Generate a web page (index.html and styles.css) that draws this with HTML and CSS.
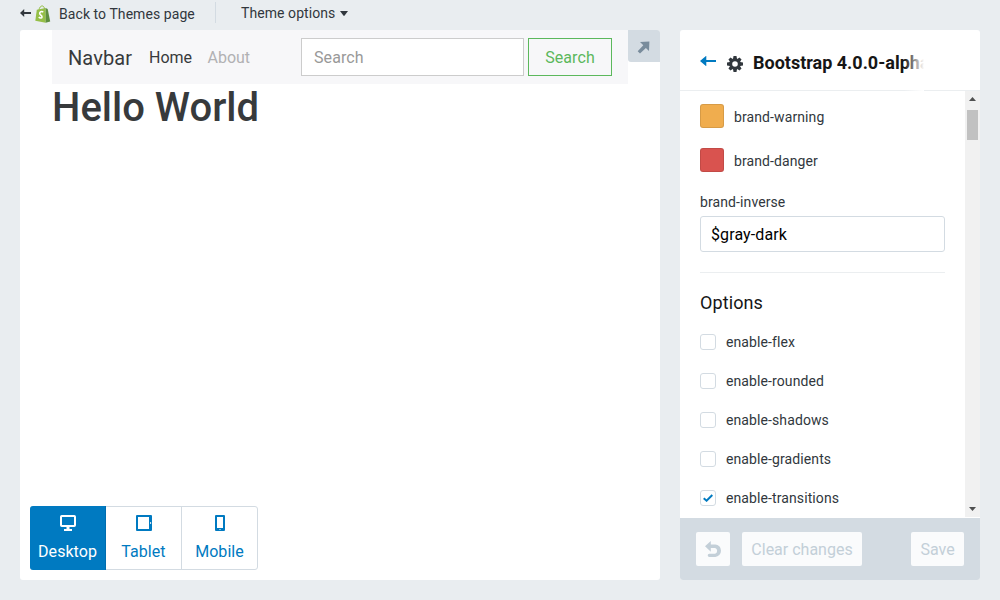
FILE: index.html
```html
<!DOCTYPE html>
<html lang="en">
<head>
<meta charset="utf-8">
<title>Theme editor</title>
<link rel="stylesheet" href="styles.css">
</head>
<body>
<header class="topbar">
  <a class="back">
    <svg class="back-arrow" width="11" height="8" viewBox="0 0 11 8"><path d="M0 4 4.200 0v3H11v2H4.200v3z" fill="#31373d"/></svg>
    <svg class="bag" width="16" height="18" viewBox="0 0 16 18"><path d="M1.800 4.700 10.600 3v14.800L.3 15.800z" fill="#95bf47"/><path d="M10.600 3l2.100 1.100 2.500 12.300-4.600 1.400z" fill="#5e8e3e"/><path d="M4 5C4.300 2.500 5.800.9 7.100.9S9.400 2.200 9.500 4" fill="none" stroke="#95bf47" stroke-width="1"/><path d="M8.300 6.900C6.500 6.100 4.600 6.800 4.700 8.500 4.800 10.200 7.300 10.100 7 12.100 6.800 13.500 5 13.200 3.700 12.100" fill="none" stroke="#fff" stroke-width="1.600"/></svg>
    <span>Back to Themes page</span>
  </a>
  <a class="theme-options">Theme options <svg width="8" height="5" viewBox="0 0 8 5"><path d="M0 0h8L4.600 4.600q-.6.6-1.200 0z" fill="#31373d"/></svg></a>
</header>
<main class="workspace">
  <section class="preview">
    <div class="site">
      <nav class="navbar">
        <span class="brand">Navbar</span><span class="home">Home</span><span class="about">About</span>
        <div class="search-input">Search</div>
        <div class="search-button">Search</div>
      </nav>
      <h1 class="headline">Hello World</h1>
    </div>
    <div class="expand"><svg width="13" height="13" viewBox="0 0 13 13"><path d="M3 1 12.400.4 12 10 8.900 7 3 12.500.7 10.200 6.300 4.300z" fill="#798c9c"/></svg></div>
    <div class="devices">
      <div class="device active"><svg width="16" height="16" viewBox="0 0 16 16"><rect x="1" y="1" width="14" height="10" rx=".8" fill="none" stroke="currentColor" stroke-width="2"/><path d="M6.500 11h3v3H12v2H4v-2h2.500z" fill="currentColor"/></svg><span>Desktop</span></div>
      <div class="device"><svg width="16" height="16" viewBox="0 0 16 16"><path fill="currentColor" fill-rule="evenodd" d="M1 0h14q1 0 1 1v14q0 1-1 1H1q-1 0-1-1V1q0-1 1-1zm1 2v12h11V2zm12.200 5v2h.9V7z"/></svg><span>Tablet</span></div>
      <div class="device"><svg width="16" height="16" viewBox="0 0 16 16"><path fill="currentColor" fill-rule="evenodd" d="M4 0h8q1 0 1 1v14q0 1-1 1H4q-1 0-1-1V1q0-1 1-1zm1 2v11h6V2zm2.500 12v1h1v-1z"/></svg><span>Mobile</span></div>
    </div>
  </section>
  <aside class="panel">
    <div class="panel-head">
      <svg class="panel-back" width="16" height="10" viewBox="0 0 16 10"><path d="M0 5 6.300-.3V3.900H16v2.200H6.300v4.200z" fill="#007ac1"/></svg>
      <svg class="gear" width="16" height="16" viewBox="-8 -8 16 16"><g fill="#31373d"><path d="M-1.500-8h3l.5 3h-4zM-1.500 8h3l.5-3h-4zM-8-1.500v3l3 .5v-4zM8-1.500v3l-3 .5v-4z"/><path transform="rotate(45)" d="M-1.500-7.800h3l.5 3h-4zM-1.500 7.800h3l.5-3h-4zM-7.800-1.500v3l3 .5v-4zM7.800-1.500v3l-3 .5v-4z"/></g><circle r="4.300" fill="none" stroke="#31373d" stroke-width="3"/></svg>
      <h2 class="panel-title">Bootstrap 4.0.0-alpha</h2>
    </div>
    <div class="panel-scroll">
      <div class="settings">
        <div class="swatch-row"><span class="swatch warning"></span>brand-warning</div>
        <div class="swatch-row"><span class="swatch danger"></span>brand-danger</div>
        <div class="field-label">brand-inverse</div>
        <div class="field">$gray-dark</div>
        <h3 class="group-title">Options</h3>
        <div class="check-row"><span class="box"></span>enable-flex</div>
        <div class="check-row"><span class="box"></span>enable-rounded</div>
        <div class="check-row"><span class="box"></span>enable-shadows</div>
        <div class="check-row"><span class="box"></span>enable-gradients</div>
        <div class="check-row"><span class="box"><svg width="10" height="8" viewBox="0 0 10 8"><path d="M.7 4.200 3.600 6.700 9.300 1" fill="none" stroke="#007ac1" stroke-width="2"/></svg></span>enable-transitions</div>
      </div>
      <div class="scrollbar">
        <svg width="7" height="4" viewBox="0 0 7 4"><path d="M0 4 3.500 0 7 4z" fill="#505050"/></svg>
        <span class="thumb"></span>
        <svg class="down" width="7" height="4" viewBox="0 0 7 4"><path d="M0 0h7L3.500 4z" fill="#505050"/></svg>
      </div>
    </div>
    <footer class="panel-foot">
      <div class="btn undo"><svg width="16" height="16" viewBox="0 0 16 16"><path d="M0 5.200 5.800 0v3.500h4.500a5.700 6.200 0 0 1 0 12.400H4.300q-1.600 0-1.600-1.600t1.600-1.600h5.800a2.500 2.900 0 0 0 0-5.700H5.800v3.700z" fill="#c3cfd8"/></svg></div>
      <div class="btn clear">Clear changes</div>
      <div class="btn save">Save</div>
    </footer>
  </aside>
</main>
</body>
</html>
```
FILE: styles.css
```css
* { box-sizing: border-box; }
body { margin: 0; width: 1000px; height: 600px; overflow: hidden; background: #e9edf0; color: #31373d; font: 14px/20px Roboto, sans-serif; white-space: nowrap; }
svg { display: block; flex: none; }
h1, h2, h3 { margin: 0; }

.topbar { display: flex; height: 30px; padding-left: 20px; letter-spacing: .07px; }
.back { display: flex; width: 196px; height: 21px; margin-top: 2px; border-right: 1px solid #d3dbe2; }
.back-arrow { margin-top: 7px; }
.bag { margin: 3px 8px 0 4px; }
.back span { margin-top: 2px; }
.theme-options { display: flex; margin: 3px 0 0 25px; gap: 5px; }
.theme-options svg { margin-top: 8px; }

.workspace { display: flex; gap: 20px; padding: 0 20px; height: 550px; }
.preview { position: relative; width: 640px; background: #fff; border-radius: 3px; }
.site { margin: 0 32px; color: #373a3c; }
.navbar { display: flex; height: 54px; padding: 8px 16px; background: #f7f7f9; font-size: 16px; line-height: 40px; }
.brand { width: 81px; font-size: 20px; letter-spacing: .1px; }
.home { width: 58.500px; }
.about { width: 93.500px; color: #b1b1b3; }
.search-input { width: 223px; height: 38px; padding-left: 12px; border: 1px solid #ccc; background: #fff; color: #999; line-height: 38px; letter-spacing: .1px; }
.search-button { width: 84px; height: 38px; margin-left: 4px; border: 1px solid #5cb85c; color: #5cb85c; line-height: 38px; text-align: center; letter-spacing: .1px; }
.headline { padding-top: 2px; font-size: 40px; line-height: 44px; font-weight: 500; }
.expand { position: absolute; top: 0; right: 0; width: 32px; height: 32px; padding: 11px 0 0 9px; background: #d3dbe2; border-radius: 0 3px 0 3px; }
.devices { position: absolute; left: 10px; bottom: 10px; display: flex; width: 228px; height: 64px; border: 1px solid #d3dbe2; border-radius: 3px; color: #007ac1; font-size: 16px; }
.device { display: flex; flex-direction: column; align-items: center; width: 76px; padding-top: 8px; gap: 11px; border-right: 1px solid #d3dbe2; letter-spacing: .05px; }
.device:last-child { width: 75px; border: 0; }
.device.active { height: 64px; margin: -1px 0 0 -1px; padding-top: 9px; background: #007ac1; border-right-color: #006daf; border-radius: 3px 0 0 3px; color: #fff; }

.panel { display: flex; flex-direction: column; width: 300px; background: #fff; border-radius: 3px; overflow: hidden; }
.panel-head { display: flex; height: 61px; padding-left: 20px; border-bottom: 1px solid #ebeef0; }
.panel-back { margin-top: 26px; }
.gear { margin: 26px 10px 0 11px; }
.panel-title { position: relative; width: 171px; height: 61px; padding-top: 20px; overflow: hidden; color: #161616; font-size: 18px; line-height: 26px; font-weight: 700; }
.panel-title::after { content: ""; position: absolute; top: 0; right: 0; width: 20px; height: 61px; background: linear-gradient(90deg, rgba(255, 255, 255, 0), #fff); }
.panel-scroll { display: flex; height: 426px; }
.settings { width: 285px; padding: 13px 20px 0; overflow: hidden; letter-spacing: .1px; }
.swatch-row { display: flex; height: 24px; margin-bottom: 20px; gap: 10px; line-height: 26px; }
.swatch { width: 24px; height: 24px; border: 1px solid rgba(0, 0, 0, .1); border-radius: 3px; }
.warning { background: #f0ad4e; }
.danger { background: #d9534f; }
.field-label { margin-bottom: 4px; }
.field { height: 36px; padding-left: 10px; border: 1px solid #d3dbe2; border-radius: 3px; color: #000; font-size: 16px; line-height: 35px; }
.group-title { margin-top: 20px; padding-top: 18px; height: 62px; border-top: 1px solid #ebeef0; color: #161616; font-size: 18px; line-height: 24px; font-weight: 400; }
.check-row { display: flex; height: 16px; margin-bottom: 23px; gap: 10px; line-height: 16px; }
.box { display: flex; align-items: center; justify-content: center; width: 16px; height: 16px; border: 1px solid #d3dbe2; border-radius: 3px; }
.scrollbar { display: flex; flex-direction: column; align-items: center; width: 15px; padding-top: 6px; background: #f1f1f1; }
.thumb { width: 11px; height: 30px; margin-top: 9px; background: #c1c1c1; }
.down { margin: auto 0 6px; }
.panel-foot { display: flex; height: 62px; margin-top: 1px; padding: 14px 16px; background: #d3dbe2; font-size: 16px; }
.btn { height: 34px; border-radius: 2px; background: #fafbfc; color: #c3cfd8; line-height: 35px; text-align: center; }
.undo { width: 34px; margin-right: 12px; padding: 9px; }
.clear { width: 120px; }
.save { width: 53px; margin-left: auto; }
```
